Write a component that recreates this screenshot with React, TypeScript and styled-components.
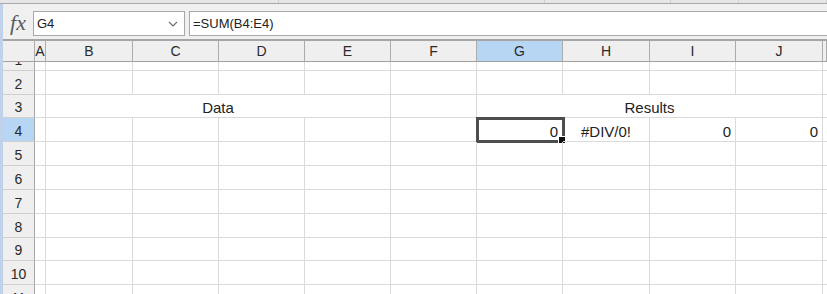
import React from "react";
import styled, { createGlobalStyle } from "styled-components";

const GlobalStyle = createGlobalStyle`
  html, body {
    margin: 0;
    padding: 0;
    background: #ffffff;
    overflow: hidden;
  }
  body {
    font-family: "Liberation Sans", Arial, sans-serif;
    color: #222;
  }
`;

const COLS = "32px 11px 87px 86px 86px 86px 86px 86px 87px 86px 87px 1fr";

const Page = styled.div`
  width: 827px;
  height: 294px;
  display: flex;
  flex-direction: column;
  overflow: hidden;
  background: #fff;
`;

const TopStrip = styled.div`
  height: 3px;
  display: flex;
  background: #e6e6e6;
  border-bottom: 1px solid #a9a9a9;
`;

const StripSegment = styled.div<{ $w?: number }>`
  flex: ${(p) => (p.$w ? `0 0 ${p.$w}px` : "1 1 auto")};
  border-right: 1px solid #cfcfcf;
`;

const Body = styled.div`
  flex: 1;
  display: flex;
  flex-direction: column;
  border-left: 3px solid #bfd2ea;
  min-height: 0;
`;

const FormulaBar = styled.div`
  display: flex;
  align-items: stretch;
  background: #f0f0f0;
  padding: 7px 0 3px 0;
  height: 25px;
`;

const FxLabel = styled.div`
  width: 30px;
  display: flex;
  align-items: center;
  justify-content: center;
  font-family: "Liberation Serif", "Times New Roman", serif;
  font-style: italic;
  font-size: 22px;
  color: #5a5a5a;
  padding-bottom: 2px;
  box-sizing: border-box;
`;

const NameBox = styled.div`
  width: 152px;
  box-sizing: border-box;
  background: #fff;
  border: 1px solid #a8a8a8;
  display: flex;
  align-items: center;
  justify-content: space-between;
  padding: 0 6px 0 3px;
  font-size: 13px;
  color: #222;
`;

const FormulaInput = styled.div`
  flex: 1;
  margin-left: 4px;
  box-sizing: border-box;
  background: #fff;
  border: 1px solid #a8a8a8;
  border-right: none;
  display: flex;
  align-items: center;
  padding-left: 3px;
  font-size: 13px;
  color: #222;
`;

const Grid = styled.div`
  flex: 1;
  display: flex;
  flex-direction: column;
  border-top: 2px solid #a6a6a6;
  min-height: 0;
`;

const HeaderRow = styled.div`
  display: grid;
  grid-template-columns: ${COLS};
  height: 21px;
`;

const ColHeader = styled.div<{ $active?: boolean }>`
  box-sizing: border-box;
  background: ${(p) => (p.$active ? "#b6d6f3" : "#efefef")};
  border-right: 1px solid #acacac;
  border-bottom: 1px solid #a0a0a0;
  display: flex;
  align-items: center;
  justify-content: center;
  font-size: 14px;
  color: #2a2a2a;
  overflow: hidden;
`;

const Viewport = styled.div`
  flex: 1;
  overflow: hidden;
  min-height: 0;
`;

const Rows = styled.div`
  margin-top: -15px;
`;

const Row = styled.div<{ $h: number }>`
  display: grid;
  grid-template-columns: ${COLS};
  height: ${(p) => p.$h}px;
`;

const RowHeader = styled.div<{ $active?: boolean }>`
  box-sizing: border-box;
  background: ${(p) => (p.$active ? "#b6d6f3" : "#efefef")};
  border-right: 1px solid #a6a6a6;
  border-bottom: 1px solid #cfcfcf;
  display: flex;
  align-items: flex-end;
  justify-content: center;
  font-size: 14px;
  line-height: 14px;
  padding-bottom: 3px;
  color: #2a2a2a;
`;

const Cell = styled.div<{ $align?: "left" | "center" | "right"; $span?: number }>`
  position: relative;
  box-sizing: border-box;
  grid-column: ${(p) => (p.$span ? `span ${p.$span}` : "auto")};
  border-right: 1px solid #dadada;
  border-bottom: 1px solid #dadada;
  display: flex;
  align-items: flex-end;
  justify-content: ${(p) =>
    p.$align === "right" ? "flex-end" : p.$align === "center" ? "center" : "flex-start"};
  padding: 0 4px 2px 4px;
  font-size: 15px;
  line-height: 15px;
  color: #222;
  white-space: nowrap;
`;

const Selection = styled.div`
  position: absolute;
  left: -1px;
  top: -1px;
  right: -3px;
  bottom: -2px;
  border: 3px solid #4d4d4d;
  pointer-events: none;
`;

const Handle = styled.div`
  position: absolute;
  right: -4px;
  bottom: -4px;
  width: 6px;
  height: 6px;
  background: #111;
  border: 1px solid #fff;
`;

const Chevron = () => (
  <svg width="10" height="6" viewBox="0 0 10 6" fill="none">
    <path d="M1 1 L5 5 L9 1" stroke="#6b6b6b" strokeWidth="1.1" />
  </svg>
);

const colLetters = ["A", "B", "C", "D", "E", "F", "G", "H", "I", "J", ""];
const rowHeights = [24, 24, 23, 24, 24, 24, 24, 24, 23, 24, 24];

type CellSpec = { text?: string; align?: "left" | "center" | "right"; span?: number; selected?: boolean };

const rowData: Record<number, CellSpec[]> = {
  3: [
    {},
    { text: "Data", align: "center", span: 4 },
    {},
    { text: "Results", align: "center", span: 4 },
    {},
  ],
  4: [
    {},
    {},
    {},
    {},
    {},
    {},
    { text: "0", align: "right", selected: true },
    { text: "#DIV/0!", align: "center" },
    { text: "0", align: "right" },
    { text: "0", align: "right" },
    {},
  ],
};

const emptyRow: CellSpec[] = Array.from({ length: 11 }, () => ({}));

export default function App() {
  return (
    <>
      <GlobalStyle />
      <Page>
        <TopStrip>
          <StripSegment $w={278} />
          <StripSegment $w={265} />
          <StripSegment $w={125} />
          <StripSegment $w={67} />
          <StripSegment />
        </TopStrip>
        <Body>
          <FormulaBar>
            <FxLabel>fx</FxLabel>
            <NameBox>
              <span>G4</span>
              <Chevron />
            </NameBox>
            <FormulaInput>=SUM(B4:E4)</FormulaInput>
          </FormulaBar>
          <Grid>
            <HeaderRow>
              <ColHeader />
              {colLetters.map((c, i) => (
                <ColHeader key={i} $active={c === "G"}>
                  {c}
                </ColHeader>
              ))}
            </HeaderRow>
            <Viewport>
              <Rows>
                {rowHeights.map((h, idx) => {
                  const n = idx + 1;
                  const cells = rowData[n] ?? emptyRow;
                  return (
                    <Row key={n} $h={h}>
                      <RowHeader $active={n === 4}>{n}</RowHeader>
                      {cells.map((c, ci) => (
                        <Cell key={ci} $align={c.align} $span={c.span}>
                          {c.text}
                          {c.selected && (
                            <Selection>
                              <Handle />
                            </Selection>
                          )}
                        </Cell>
                      ))}
                    </Row>
                  );
                })}
              </Rows>
            </Viewport>
          </Grid>
        </Body>
      </Page>
    </>
  );
}
